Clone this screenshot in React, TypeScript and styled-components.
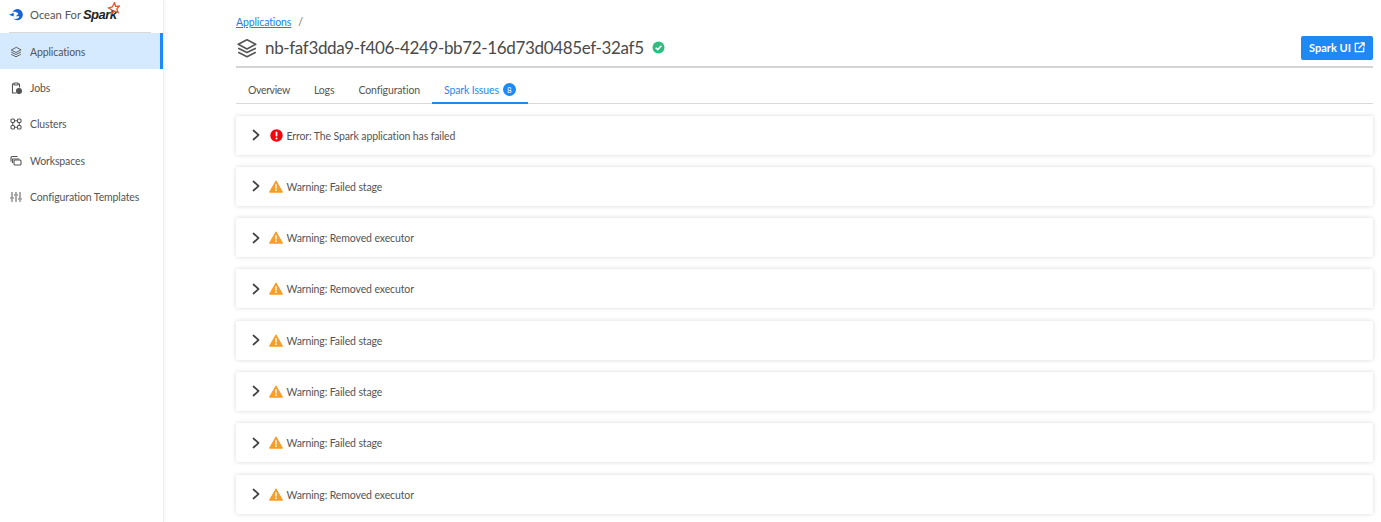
import React from "react";
import styled, { createGlobalStyle } from "styled-components";

const Global = createGlobalStyle`
  html, body { margin: 0; padding: 0; background: #fff; }
  body { font-family: "Lato", "Open Sans", sans-serif; color: #4d4d4d; overflow: hidden; }
  * { box-sizing: border-box; }
`;
const Shell = styled.div`
  display: flex; width: 1381px; height: 522px; overflow: hidden; background: #fff;
`;
const Sidebar = styled.aside`
  width: 164px; flex: none; height: 522px; background: #fff;
  border-right: 1px solid #efefef; box-shadow: 1px 0 4px rgba(0,0,0,.05);
`;
const Brand = styled.div`
  height: 33px; margin: 0 12px 0 9px; border-bottom: 1px solid #d9d9d9;
  display: flex; align-items: center; gap: 6px; position: relative; padding-bottom: 3px;
`;
const BrandText = styled.span`
  font-size: 11.2px; color: #555; display: flex; align-items: center; gap: 2px; white-space: nowrap;
`;
const SparkWord = styled.span`
  font-family: "Liberation Sans", sans-serif; font-style: italic; font-weight: 700;
  font-size: 13px; color: #222; letter-spacing: -.5px; margin-top: -1px;
`;
const Nav = styled.nav`
  display: flex; flex-direction: column;
`;
const NavItem = styled.div<{ $active?: boolean }>`
  height: 36.3px; display: flex; align-items: center; gap: 8px; padding: 1.5px 0 0 10px;
  font-size: 10.5px; letter-spacing: -.12px; color: #555; white-space: nowrap;
  background: ${p => (p.$active ? "#d6eaff" : "transparent")};
  border-right: 3px solid ${p => (p.$active ? "#1e88f5" : "transparent")};
`;
const Main = styled.main`
  flex: 1; min-width: 0; padding: 0 8px 0 72px;
`;
const Crumbs = styled.div`
  height: 31px; padding-top: 14px; font-size: 10.5px; letter-spacing: -.12px; line-height: 16px; display: flex; gap: 7px; color: #666;
`;
const CrumbLink = styled.a`
  color: #1a7fe8; text-decoration: underline;
`;
const TitleBar = styled.div`
  height: 37px; display: flex; align-items: center; border-bottom: 2px solid #d4d4d4; padding-bottom: 2px;
`;
const Title = styled.h1`
  margin: 0 8px 0 7px; font-weight: 400; font-size: 17px; letter-spacing: -.35px; color: #4a4a4a; white-space: nowrap;
`;
const SparkButton = styled.button`
  margin-left: auto; width: 72px; height: 24px; border: 0; border-radius: 2px; background: #1e88f5; color: #fff;
  font: 700 11px "Lato", sans-serif; display: flex; align-items: center; justify-content: center; gap: 3px;
`;
const Tabs = styled.div`
  margin-top: 12px; height: 24px; display: flex; border-bottom: 1px solid #d9d9d9;
`;
const Tab = styled.div<{ $active?: boolean; $tight?: boolean }>`
  height: 24px; padding: 0 12px 3px; display: flex; align-items: center; gap: 4px;
  font-size: 10.5px; letter-spacing: ${p => (p.$tight ? "-.35px" : "-.12px")}; white-space: nowrap;
  color: ${p => (p.$active ? "#1e88f5" : "#555")};
  border-bottom: 2px solid ${p => (p.$active ? "#1e88f5" : "transparent")};
`;
const Badge = styled.span`
  width: 13px; height: 13px; border-radius: 50%; background: #1e88f5; color: #fff; font-size: 8px;
  display: flex; align-items: center; justify-content: center;
`;
const Issues = styled.div`
  margin-top: 11.5px; display: flex; flex-direction: column; gap: 12.3px;
`;
const Issue = styled.div`
  height: 39px; flex: none; display: flex; align-items: center; background: #fff; border-radius: 2px;
  box-shadow: 0 0 4px rgba(0,0,0,.16); padding-left: 14.5px; font-size: 10.5px; letter-spacing: -.12px; color: #555; white-space: nowrap;
`;
const Label = styled.span`
  margin-left: 3.5px; padding-top: 1px;
`;
const IconSlot = styled.span`
  display: flex; width: 14px; height: 14px; margin-left: 8.5px; align-items: center; justify-content: center;
`;
const StarMark = styled.svg`
  position: absolute; left: 98px; top: 2px;
`;

const Layers = ({ s = 13 }: { s?: number }) => (
  <svg width={s} height={s} viewBox="0 0 24 24" fill="none" stroke="#555" strokeWidth="1.8" strokeLinejoin="round" strokeLinecap="round">
    <path d="M12 3 2.5 8 12 13l9.5-5z" /><path d="M3 12.5 12 17l9-4.5" /><path d="M3 17l9 4.5 9-4.5" />
  </svg>
);
const Jobs = () => (
  <svg width="12" height="12" viewBox="0 0 24 24" fill="none" stroke="#555" strokeWidth="2.2">
    <path d="M9 4H5v18h8" /><path d="M15 4h4v7" /><rect x="8" y="2" width="8" height="4" rx="1" />
    <circle cx="18" cy="18" r="5" fill="#555" />
  </svg>
);
const Clusters = () => (
  <svg width="12" height="12" viewBox="0 0 24 24" fill="none" stroke="#555" strokeWidth="2.2">
    <rect x="2" y="2" width="7" height="7" rx="2" /><rect x="15" y="2" width="7" height="7" rx="2" />
    <rect x="2" y="15" width="7" height="7" rx="2" /><rect x="15" y="15" width="7" height="7" rx="2" />
    <path d="M9 5.5h6M9 18.5h6M5.5 9v6M18.5 9v6" />
  </svg>
);
const Workspaces = () => (
  <svg width="12" height="12" viewBox="0 0 24 24" fill="none" stroke="#555" strokeWidth="2.2" strokeLinejoin="round">
    <path d="M2 13V5a2 2 0 0 1 2-2h11" /><path d="M5 16V8h14" />
    <rect x="8" y="10" width="14" height="10" rx="2" />
  </svg>
);
const Sliders = () => (
  <svg width="12" height="12" viewBox="0 0 24 24" fill="none" stroke="#555" strokeWidth="2" strokeLinecap="round">
    <path d="M4 3v9M4 17v4M12 3v3M12 11v10M20 3v11M20 19v2M1 14h6M9 8h6M17 16h6" />
  </svg>
);
const Chevron = () => (
  <svg width="10" height="12" viewBox="0 0 10 12" fill="none" stroke="#444" strokeWidth="1.7" strokeLinecap="round" strokeLinejoin="round">
    <path d="M2.5 1.5 7.5 6l-5 4.5" />
  </svg>
);
const ErrorIcon = () => (
  <svg width="13" height="13" viewBox="0 0 13 13">
    <circle cx="6.5" cy="6.5" r="6.2" fill="#f5060f" />
    <rect x="5.6" y="2.6" width="1.8" height="5" rx=".8" fill="#fff" /><circle cx="6.5" cy="9.4" r="1" fill="#fff" />
  </svg>
);
const WarnIcon = () => (
  <svg width="14" height="13" viewBox="0 0 14 13">
    <path d="M7 .8 13.5 12.2H.5z" fill="#fa9d25" stroke="#fa9d25" strokeLinejoin="round" />
    <rect x="6.3" y="4.2" width="1.4" height="4.4" fill="#fff" /><circle cx="7" cy="10.2" r=".85" fill="#fff" />
  </svg>
);
const Check = () => (
  <svg width="13" height="13" viewBox="0 0 13 13">
    <circle cx="6.5" cy="6.5" r="6" fill="#2dbd7e" />
    <path d="M3.7 6.7 5.7 8.6 9.4 4.7" fill="none" stroke="#fff" strokeWidth="1.5" />
  </svg>
);
const External = () => (
  <svg width="11" height="11" viewBox="0 0 24 24" fill="none" stroke="#fff" strokeWidth="3">
    <path d="M12 3H3v18h18v-9" /><path d="M10 14 21 3M14 2h8v8" />
  </svg>
);
const Logo = () => (
  <svg width="15" height="13" viewBox="0 0 14 12">
    <path d="M3.2 3.6A5.2 5.2 0 1 1 4 9.8c2.6.8 5.2 0 5.7-2.2H6.4L8.8 5.2C7.4 3.6 5 3.2 3.2 3.6z" fill="#1763d8" />
    <path d="M0 6.3 4.4 4.4v3.4z" fill="#1763d8" />
  </svg>
);
const Star = () => (
  <StarMark width="13" height="13" viewBox="0 0 13 13">
    <path d="M7.5.7 8.6 4.4 12.4 4 9.8 6.8 11.2 10.5 7.6 9 4.4 11.8 4.8 8 1.5 6 5.2 5z" fill="none" stroke="#e8562a" strokeWidth="1.3" />
  </StarMark>
);

const issues: [boolean, string][] = [
  [true, "Error: The Spark application has failed"],
  [false, "Warning: Failed stage"],
  [false, "Warning: Removed executor"],
  [false, "Warning: Removed executor"],
  [false, "Warning: Failed stage"],
  [false, "Warning: Failed stage"],
  [false, "Warning: Failed stage"],
  [false, "Warning: Removed executor"],
];

export default function App() {
  return (
    <Shell>
      <Global />
      <Sidebar>
        <Brand>
          <Logo />
          <BrandText>Ocean For <SparkWord>Spark</SparkWord></BrandText>
          <Star />
        </Brand>
        <Nav>
          <NavItem $active><Layers s={12} />Applications</NavItem>
          <NavItem><Jobs />Jobs</NavItem>
          <NavItem><Clusters />Clusters</NavItem>
          <NavItem><Workspaces />Workspaces</NavItem>
          <NavItem><Sliders />Configuration Templates</NavItem>
        </Nav>
      </Sidebar>
      <Main>
        <Crumbs><CrumbLink>Applications</CrumbLink><span>/</span></Crumbs>
        <TitleBar>
          <Layers s={22} />
          <Title>nb-faf3dda9-f406-4249-bb72-16d73d0485ef-32af5</Title>
          <Check />
          <SparkButton>Spark UI <External /></SparkButton>
        </TitleBar>
        <Tabs>
          <Tab $tight>Overview</Tab>
          <Tab>Logs</Tab>
          <Tab>Configuration</Tab>
          <Tab $active>Spark Issues <Badge>8</Badge></Tab>
        </Tabs>
        <Issues>
          {issues.map(([err, text], i) => (
            <Issue key={i}>
              <Chevron />
              <IconSlot>{err ? <ErrorIcon /> : <WarnIcon />}</IconSlot>
              <Label>{text}</Label>
            </Issue>
          ))}
        </Issues>
      </Main>
    </Shell>
  );
}
